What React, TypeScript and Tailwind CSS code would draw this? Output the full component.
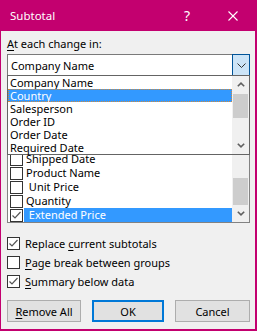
import React from "react";

const Box = ({ checked }: { checked?: boolean }) => (
  <div className="w-[13px] h-[13px] border border-[#333] bg-white shrink-0 flex items-center justify-center box-border">
    {checked ? (
      <svg width="11" height="11" viewBox="0 0 11 11" className="block">
        <polyline points="1.5,5.5 4,8 9.5,2" fill="none" stroke="#555" strokeWidth="1.2" />
      </svg>
    ) : null}
  </div>
);

const Up = () => (
  <svg width="8" height="5" viewBox="0 0 8 5" className="block">
    <polyline points="0.8,4.3 4,1.2 7.2,4.3" fill="none" stroke="#606060" strokeWidth="1.6" />
  </svg>
);
const Down = () => (
  <svg width="8" height="5" viewBox="0 0 8 5" className="block">
    <polyline points="0.8,0.7 4,3.8 7.2,0.7" fill="none" stroke="#606060" strokeWidth="1.6" />
  </svg>
);

export default function App() {
  const dd = ["Company Name", "Country", "Salesperson", "Order ID", "Order Date", "Required Date"];
  const cl: [string, boolean][] = [
    ["", false],
    ["Shipped Date", false],
    ["Product Name", false],
    [" Unit Price", false],
    ["Quantity", false],
    [" Extended Price", true],
  ];
  return (
    <div className="w-[257px] h-[331px] flex flex-col bg-[#c3006f] pl-px pr-[2px] pb-[2px] font-['Noto_Sans',sans-serif] text-[11px] text-black">
      <div className="h-[31px] shrink-0 flex items-center text-white">
        <span className="ml-[9px] text-[11.5px] leading-[15px]">Subtotal</span>
        <span className="ml-auto text-[14px] leading-[16px]">?</span>
        <svg width="10" height="10" viewBox="0 0 10 10" className="ml-[38px] mr-[17px] block">
          <line x1="0.5" y1="0.5" x2="9.5" y2="9.5" stroke="white" strokeWidth="1.1" />
          <line x1="9.5" y1="0.5" x2="0.5" y2="9.5" stroke="white" strokeWidth="1.1" />
        </svg>
      </div>
      <div className="flex-1 bg-[#f0f0f0] relative pl-[6px] pr-[5px] pt-[5px] flex flex-col">
        <div className="leading-[15px] h-[15px]">
          <span className="underline underline-offset-2">A</span>t each change in:
        </div>
        <div className="mt-[3px] h-[22px] border border-[#7a7a7a] bg-white flex items-center">
          <span className="pl-[3px] leading-[15px] flex-1">Company Name</span>
          <div className="w-[18px] h-[22px] -my-px -mr-px border border-[#005499] bg-[#cce4f7] flex items-center justify-center">
            <svg width="9" height="5" viewBox="0 0 9 5" className="block">
              <polyline points="0.5,0.5 4.5,4.5 8.5,0.5" fill="none" stroke="#333" strokeWidth="1" />
            </svg>
          </div>
        </div>
        <div className="h-[61px]" />
        <div className="h-[86px] border border-[#828282] bg-white flex">
          <div className="flex-1 flex flex-col">
            {cl.map(([t, c], i) => (
              <div key={i} className="h-[14px] flex items-center pl-[2px]">
                <Box checked={c} />
                <span
                  className={`ml-px pl-[2px] h-[14px] leading-[14px] flex-1 whitespace-pre ${
                    c ? "bg-[#3399ff] text-white" : ""
                  }`}
                >
                  {t}
                </span>
              </div>
            ))}
          </div>
          <div className="w-[17px] bg-[#f0f0f0] flex flex-col items-center">
            <div className="h-[17px] flex items-center justify-center">
              <Up />
            </div>
            <div className="mt-[23px] w-[15px] h-[27px] bg-[#cdcdcd]" />
            <div className="flex-1 flex items-center justify-center">
              <Down />
            </div>
          </div>
        </div>
        <div className="mt-[11px] flex flex-col">
          <div className="h-[19px] flex items-center">
            <Box checked />
            <span className="ml-[5px] leading-[15px]">
              Replace <span className="underline underline-offset-2">c</span>urrent subtotals
            </span>
          </div>
          <div className="h-[19px] flex items-center">
            <Box />
            <span className="ml-[5px] leading-[15px]">
              <span className="underline underline-offset-2">P</span>age break between groups
            </span>
          </div>
          <div className="h-[19px] flex items-center">
            <Box checked />
            <span className="ml-[5px] leading-[15px]">
              <span className="underline underline-offset-2">S</span>ummary below data
            </span>
          </div>
        </div>
        <div className="mt-[9px] flex justify-between">
          <div className="w-[74px] h-[22px] border border-[#adadad] bg-[#e1e1e1] flex items-center justify-center leading-[15px]">
            <span>
              <span className="underline underline-offset-2">R</span>emove All
            </span>
          </div>
          <div className="w-[72px] h-[22px] border-2 border-[#0078d7] bg-[#e1e1e1] flex items-center justify-center leading-[15px]">
            OK
          </div>
          <div className="w-[75px] h-[22px] border border-[#adadad] bg-[#e1e1e1] flex items-center justify-center leading-[15px]">
            Cancel
          </div>
        </div>

        <div className="absolute left-[6px] top-[44px] w-[243px] h-[80px] border border-[#646464] bg-white flex">
          <div className="flex-1 flex flex-col">
            {dd.map((t, i) => (
              <div
                key={i}
                className={`h-[13px] leading-[13px] pl-[2px] ${
                  i === 1 ? "bg-[#3399ff] text-white outline outline-1 outline-dotted outline-[#d08a3c] -outline-offset-1" : ""
                }`}
              >
                {t}
              </div>
            ))}
          </div>
          <div className="w-[17px] bg-[#f0f0f0] flex flex-col items-center">
            <div className="h-[17px] flex items-center justify-center">
              <Up />
            </div>
            <div className="mt-px w-[15px] h-[24px] bg-[#cdcdcd]" />
            <div className="flex-1 flex items-end justify-center pb-[6px]">
              <Down />
            </div>
          </div>
        </div>
      </div>
    </div>
  );
}
